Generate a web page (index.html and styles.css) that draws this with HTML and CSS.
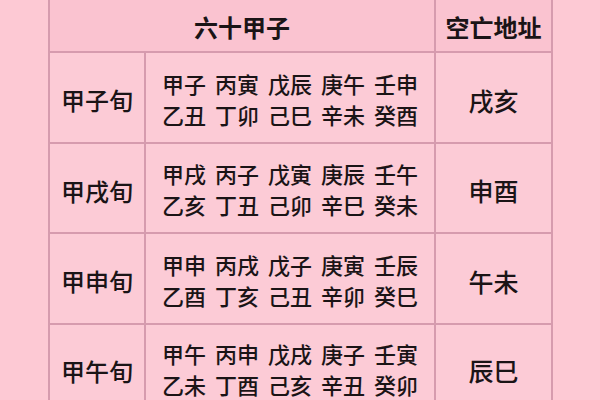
FILE: index.html
```html
<!DOCTYPE html>
<html lang="zh-CN">
<head>
<meta charset="utf-8">
<link rel="stylesheet" href="styles.css">
</head>
<body>
<div class="page">
  <div class="table">
    <div class="cell head span2">六十甲子</div>
    <div class="cell head">空亡地址</div>

    <div class="cell label">甲子旬</div>
    <div class="cell list"><div>甲子 丙寅 戊辰 庚午 壬申</div><div>乙丑 丁卯 己巳 辛未 癸酉</div></div>
    <div class="cell void">戌亥</div>

    <div class="cell label">甲戌旬</div>
    <div class="cell list"><div>甲戌 丙子 戊寅 庚辰 壬午</div><div>乙亥 丁丑 己卯 辛巳 癸未</div></div>
    <div class="cell void">申酉</div>

    <div class="cell label">甲申旬</div>
    <div class="cell list"><div>甲申 丙戌 戊子 庚寅 壬辰</div><div>乙酉 丁亥 己丑 辛卯 癸巳</div></div>
    <div class="cell void">午未</div>

    <div class="cell label">甲午旬</div>
    <div class="cell list"><div>甲午 丙申 戊戌 庚子 壬寅</div><div>乙未 丁酉 己亥 辛丑 癸卯</div></div>
    <div class="cell void">辰巳</div>
  </div>
</div>
</body>
</html>
```

FILE: styles.css
```css
html, body {
  margin: 0;
  padding: 0;
}
body {
  background: #fdc9d4;
  font-family: "Noto Sans CJK SC", "Noto Sans", sans-serif;
  color: #1a1416;
  overflow: hidden;
  width: 600px;
  height: 400px;
}
.page {
  padding-left: 48px;
}
.table {
  width: 501px;
  display: grid;
  grid-template-columns: 94px 288px 115px;
  grid-template-rows: 51px 89px 88px 89px 86px;
  gap: 2px;
  background: #d69bae;
  border-left: 2px solid #d69bae;
  border-right: 2px solid #d69bae;
}
.cell {
  background: #fccbd6;
  display: flex;
  align-items: center;
  justify-content: center;
  font-weight: 500;
}
.head {
  background: #fac3d0;
  font-weight: 700;
  font-size: 24px;
  padding-top: 2px;
}
.span2 {
  grid-column: span 2;
}
.label {
  font-size: 24px;
  padding-top: 4px;
}
.void {
  font-size: 25px;
  padding-top: 4px;
}
.list {
  flex-direction: column;
  font-size: 22px;
  line-height: 31px;
  word-spacing: 4px;
  padding-top: 2px;
}
```
